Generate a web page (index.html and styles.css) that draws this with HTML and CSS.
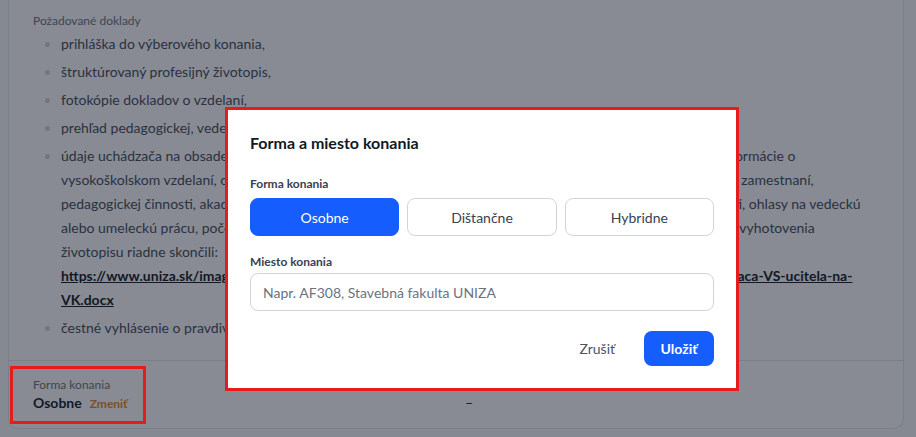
FILE: index.html
```html
<!DOCTYPE html>
<html lang="sk">
<head>
<meta charset="utf-8">
<title>Forma a miesto konania</title>
<link rel="stylesheet" href="styles.css">
</head>
<body>
<main class="page">
  <section class="card">
    <div class="docs">
      <p class="docs-label">Požadované doklady</p>
      <ul class="docs-list">
        <li>prihláška do výberového konania,</li>
        <li>štruktúrovaný profesijný životopis,</li>
        <li>fotokópie dokladov o vzdelaní,</li>
        <li>prehľad pedagogickej, vedeckej a publikačnej činnosti,</li>
        <li>údaje uchádzača na obsadenie miesta vysokoškolského učiteľa odborného asistentov vo výberovom konaní (informácie o<br>vysokoškolskom vzdelaní, o získaných akademických tituloch a vedecko-pedagogických tituloch, o priebehu ich zamestnaní,<br>pedagogickej činnosti, akademickej funkcii, riadení vedeckých úloh a projektov, publikačnej a umeleckej činnosti, ohlasy na vedeckú<br>alebo umeleckú prácu, počet školených doktorandov, ktorí pod vedením uchádzača do dnešného dňa, a ku dňu vyhotovenia<br>životopisu riadne skončili:<br><a class="doc-link" href="#">https://www.uniza.sk/images/pdf/uradna-tabula/vyberove-konania/vk1/Udaje-na-obsadenie-miesta-uchadzaca-VS-ucitela-na-<br>VK.docx</a></li>
        <li>čestné vyhlásenie o pravdivosti uvedených údajov.</li>
      </ul>
    </div>
    <div class="details">
      <div class="field field-marked">
        <span class="field-label">Forma konania</span>
        <div class="field-value"><strong>Osobne</strong><button class="change" type="button">Zmeniť</button></div>
      </div>
      <div class="field">
        <span class="field-label">Miesto konania</span>
        <div class="field-value"><span class="empty">–</span></div>
      </div>
    </div>
  </section>
</main>

<div class="backdrop"></div>

<div class="modal" role="dialog" aria-labelledby="modal-title">
  <h2 class="modal-title" id="modal-title">Forma a miesto konania</h2>
  <div class="modal-group">
    <span class="modal-label">Forma konania</span>
    <div class="segmented">
      <button class="seg seg-active" type="button">Osobne</button>
      <button class="seg" type="button">Dištančne</button>
      <button class="seg" type="button">Hybridne</button>
    </div>
  </div>
  <div class="modal-group modal-group-place">
    <label class="modal-label modal-label-place" for="place">Miesto konania</label>
    <input class="text-input" id="place" type="text" placeholder="Napr. AF308, Stavebná fakulta UNIZA">
  </div>
  <div class="modal-footer">
    <button class="btn-ghost" type="button">Zrušiť</button>
    <button class="btn-primary" type="button">Uložiť</button>
  </div>
</div>
</body>
</html>
```

FILE: styles.css
```css
html, body {
  margin: 0;
}

body {
  background: #f9fafb;
  font-family: Lato, "Noto Sans", sans-serif;
  padding: 0 12px 8px 8px;
  height: 437px;
  box-sizing: border-box;
  overflow: hidden;
}

.card {
  width: 896px;
  box-sizing: border-box;
  background: #ffffff;
  border: 1px solid #e5e7eb;
  border-top: 0;
  border-radius: 0 0 10px 10px;
}

.docs {
  padding: 13px 24px 16px;
}

.docs-label {
  margin: 0 0 3px;
  font-size: 12px;
  line-height: 16px;
  color: #6b7280;
}

.docs-list {
  margin: 0;
  padding-left: 28px;
  list-style: disc;
  font-size: 14px;
  line-height: 24px;
  color: #434b59;
}

.docs-list li {
  margin-bottom: 4px;
}

.docs-list li::marker {
  color: #d1d5db;
}

.doc-link {
  color: #111827;
  font-weight: 700;
  text-decoration: underline;
}

.details {
  border-top: 1px solid #e5e7eb;
  padding: 16px 24px 15px;
  display: grid;
  grid-template-columns: 1fr 1fr;
  column-gap: 24px;
}

.field-label {
  display: block;
  font-size: 12px;
  line-height: 16px;
  color: #6b7280;
}

.field-value {
  display: flex;
  align-items: baseline;
  gap: 8px;
  font-size: 14px;
  line-height: 20px;
  color: #111827;
}

.field-value strong {
  font-weight: 700;
}

.empty {
  margin-left: -3px;
}

.change {
  font-family: inherit;
  font-size: 12px;
  font-weight: 700;
  line-height: 16px;
  color: #e08a2c;
  background: none;
  border: 0;
  padding: 0;
}

.field-marked {
  position: relative;
}

.field-marked::after {
  content: "";
  position: absolute;
  left: -23px;
  top: -11px;
  width: 136px;
  height: 58px;
  box-sizing: border-box;
  border: 3px solid #e61c1c;
  z-index: 20;
}

.backdrop {
  position: fixed;
  inset: 0;
  background: rgba(17, 24, 39, 0.5);
  z-index: 10;
}

.modal {
  position: fixed;
  left: 226px;
  top: 108px;
  width: 512px;
  box-sizing: border-box;
  padding: 23px 24px 24px;
  background: #ffffff;
  z-index: 30;
}

.modal::after {
  content: "";
  position: absolute;
  inset: -1px;
  border: 3px solid #e61c1c;
  pointer-events: none;
}

.modal-title {
  margin: 0 0 21px;
  font-size: 16px;
  line-height: 24px;
  font-weight: 700;
  color: #111827;
}

.modal-label {
  display: block;
  font-size: 12px;
  line-height: 16px;
  font-weight: 700;
  color: #374151;
  margin-bottom: 6px;
}

.modal-group-place {
  margin-top: 18px;
}

.modal-label-place {
  margin-bottom: 3px;
}

.segmented {
  display: grid;
  grid-template-columns: repeat(3, 1fr);
  gap: 8px;
}

.seg {
  height: 38px;
  border: 1px solid #d1d5db;
  border-radius: 8px;
  background: #ffffff;
  font-family: inherit;
  font-size: 14px;
  color: #374151;
}

.seg-active {
  background: #155dfc;
  border-color: #155dfc;
  color: #ffffff;
}

.text-input {
  display: block;
  width: 100%;
  height: 38px;
  box-sizing: border-box;
  border: 1px solid #d1d5db;
  border-radius: 8px;
  padding: 0 12px;
  font-family: inherit;
  font-size: 14px;
  color: #111827;
}

.text-input::placeholder {
  color: #6b7280;
}

.modal-footer {
  margin-top: 20px;
  display: flex;
  justify-content: flex-end;
  gap: 13px;
}

.btn-ghost {
  height: 35px;
  padding: 0 16px;
  border: 0;
  background: none;
  font-family: inherit;
  font-size: 14px;
  color: #4b5563;
}

.btn-primary {
  height: 35px;
  min-width: 70px;
  padding: 0 16px;
  border: 0;
  border-radius: 8px;
  background: #155dfc;
  font-family: inherit;
  font-size: 14px;
  font-weight: 700;
  color: #ffffff;
}
```
